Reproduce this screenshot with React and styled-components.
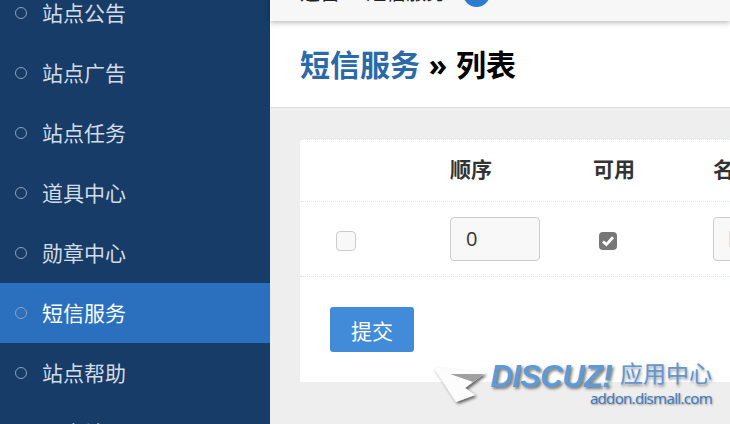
import React from "react";
import styled, { createGlobalStyle } from "styled-components";

const menuItems = [
  "站点公告",
  "站点广告",
  "站点任务",
  "道具中心",
  "勋章中心",
  "短信服务",
  "站点帮助",
  "云点地图",
];

export default function App() {
  return (
    <Page>
      <GlobalStyle />
      <Sidebar>
        {menuItems.map((item) => (
          <MenuItem key={item} $active={item === "短信服务"}>
            <MenuDot />
            <MenuLabel>{item}</MenuLabel>
          </MenuItem>
        ))}
      </Sidebar>
      <Main>
        <TopBar>
          <Crumbs>运营 » 短信服务</Crumbs>
          <CrumbBadge />
        </TopBar>
        <TitleBar>
          <Title>
            <TitleLink>短信服务</TitleLink> » 列表
          </Title>
        </TitleBar>
        <Content>
          <Card>
            <HeadRow>
              <CheckCell />
              <OrderCell>顺序</OrderCell>
              <EnableCell>可用</EnableCell>
              <NameCell>名称</NameCell>
            </HeadRow>
            <BodyRow>
              <CheckCell>
                <Check />
              </CheckCell>
              <OrderCell>
                <OrderInput defaultValue="0" />
              </OrderCell>
              <EnableCell>
                <Check $checked>
                  <svg width="14" height="14" viewBox="0 0 14 14">
                    <path d="M2 7.4 5.4 10.6 12 3.2" fill="none" stroke="#fff" strokeWidth="2.8" />
                  </svg>
                </Check>
              </EnableCell>
              <NameCell>
                <NameInput />
              </NameCell>
            </BodyRow>
            <Actions>
              <SubmitButton>提交</SubmitButton>
            </Actions>
          </Card>
        </Content>
      </Main>
      <Watermark>
        <MarkArrow width="58" height="46" viewBox="0 0 58 46">
          <defs>
            <filter id="arrowShadow" x="-20%" y="-20%" width="150%" height="150%">
              <feDropShadow dx="2" dy="2" stdDeviation="1.6" floodColor="#000" floodOpacity="0.6" />
            </filter>
          </defs>
          <path d="M1 5 53 11 41 20 33 26 43 33 24 40Z" fill="#fcfcfc" filter="url(#arrowShadow)" />
          <path d="M18 12 41 20 52 12Z" fill="#a0a0a0" />
        </MarkArrow>
        <MarkText>
          <MarkTop>
            <MarkLogo>DISCUZ!</MarkLogo>
            <MarkCn>应用中心</MarkCn>
          </MarkTop>
          <MarkUrl>addon.dismall.com</MarkUrl>
        </MarkText>
      </Watermark>
    </Page>
  );
}

const GlobalStyle = createGlobalStyle`
  html, body {
    margin: 0;
    padding: 0;
    overflow: hidden;
  }
  body {
    font-family: "Open Sans", "Liberation Sans", "Noto Sans CJK SC", sans-serif;
  }
`;

const Page = styled.div`
  position: relative;
  display: flex;
  width: 730px;
  height: 424px;
  overflow: hidden;
  background-color: #eee;
`;

const Sidebar = styled.div`
  flex: 0 0 270px;
  margin-top: -17px;
  background-color: #173c67;
`;

const MenuItem = styled.div`
  display: flex;
  align-items: center;
  gap: 15px;
  height: 60px;
  padding-left: 15px;
  font-size: 21px;
  color: ${(p) => (p.$active ? "#fff" : "#d3dbe4")};
  background-color: ${(p) => (p.$active ? "#2a70bf" : "transparent")};
`;

const MenuDot = styled.span`
  box-sizing: border-box;
  width: 12px;
  height: 12px;
  border: 1px solid #8ea3ba;
  border-radius: 50%;
`;

const MenuLabel = styled.span`
  margin-bottom: 2px;
`;

const Main = styled.div`
  flex: 1;
  min-width: 0;
  display: flex;
  flex-direction: column;
  margin-top: -30px;
`;

const TopBar = styled.div`
  position: relative;
  z-index: 1;
  display: flex;
  align-items: center;
  flex: 0 0 51px;
  padding: 0 0 5px 30px;
  box-sizing: border-box;
  background-color: #f7f7f7;
  box-shadow: 0 2px 5px rgba(0, 0, 0, 0.25);
`;

const Crumbs = styled.div`
  font-size: 20px;
  line-height: 24px;
  white-space: nowrap;
  color: #222;
  word-spacing: 3px;
`;

const CrumbBadge = styled.span`
  flex: none;
  width: 27px;
  height: 27px;
  margin-left: 17px;
  border-radius: 50%;
  background-color: #2f7bd0;
`;

const TitleBar = styled.div`
  flex: 0 0 87px;
  box-sizing: border-box;
  padding: 23px 30px 0;
  background-color: #fff;
  border-bottom: 1px solid #ddd;
`;

const Title = styled.h1`
  margin: 0;
  font-size: 30px;
  line-height: 42px;
  font-weight: 700;
  white-space: nowrap;
  word-spacing: 1px;
  color: #000;
`;

const TitleLink = styled.span`
  color: #2a6aa9;
`;

const Content = styled.div`
  padding: 31px 0 0 30px;
`;

const Card = styled.div`
  width: 600px;
  height: 243px;
  box-sizing: border-box;
  background-color: #fff;
  border-top: 1px dotted #cfe9f8;
`;

const HeadRow = styled.div`
  display: flex;
  align-items: center;
  height: 62px;
  padding-bottom: 5px;
  box-sizing: border-box;
  font-size: 21px;
  font-weight: 700;
  color: #333;
  border-bottom: 1px dotted #cfe9f8;
`;

const BodyRow = styled.div`
  display: flex;
  align-items: center;
  height: 75px;
  box-sizing: border-box;
  border-bottom: 1px dotted #cfe9f8;
`;

const CheckCell = styled.div`
  flex: 0 0 150px;
  box-sizing: border-box;
  padding: 4px 0 0 36px;
`;

const OrderCell = styled.div`
  flex: 0 0 143px;
`;

const EnableCell = styled.div`
  flex: 0 0 120px;
`;

const NameCell = styled.div`
  flex: 1;
  white-space: nowrap;
`;

const Check = styled.span`
  display: flex;
  align-items: center;
  justify-content: center;
  box-sizing: border-box;
  width: ${(p) => (p.$checked ? "18px" : "20px")};
  height: ${(p) => (p.$checked ? "18px" : "20px")};
  margin: ${(p) => (p.$checked ? "4px 0 0 6px" : "0")};
  border: ${(p) => (p.$checked ? "none" : "1px solid #ccc")};
  border-radius: 4px;
  background-color: ${(p) => (p.$checked ? "#777" : "#f8f8f8")};
`;

const OrderInput = styled.input`
  display: block;
  box-sizing: border-box;
  width: 90px;
  height: 44px;
  padding: 0 15px 2px;
  font: inherit;
  font-size: 20px;
  color: #333;
  background-color: #f8f8f8;
  border: 1px solid #ccc;
  border-radius: 4px;
  outline: none;
`;

const NameInput = styled(OrderInput)`
  width: 200px;
  background: linear-gradient(#f6dcae, #f6dcae) no-repeat 15px center / 40px 16px, #f8f8f8;
`;

const Actions = styled.div`
  padding: 30px 30px 0;
`;

const SubmitButton = styled.button`
  display: block;
  width: 84px;
  height: 45px;
  padding: 0;
  font: inherit;
  font-size: 21px;
  color: #fff;
  background-color: #428bd8;
  border: none;
  border-radius: 3px;
`;

const Watermark = styled.div`
  position: absolute;
  left: 432px;
  top: 362px;
  display: flex;
  align-items: flex-start;
  pointer-events: none;
`;

const MarkArrow = styled.svg`
  flex: none;
`;

const MarkText = styled.div`
  display: flex;
  flex-direction: column;
  align-items: flex-end;
  width: 222px;
  padding-top: 1px;
`;

const MarkTop = styled.div`
  display: flex;
  align-items: center;
  gap: 8px;
  height: 28px;
`;

const MarkLogo = styled.span`
  font-family: "Liberation Sans", sans-serif;
  font-size: 31px;
  font-style: italic;
  font-weight: 700;
  letter-spacing: -0.6px;
  color: #5e9ad8;
  text-shadow: 2px 2px 3px rgba(0, 0, 0, 0.5);
`;

const MarkCn = styled.span`
  margin-bottom: 8px;
  font-size: 23px;
  line-height: 28px;
  color: #5f97d3;
  text-shadow: 1px 2px 3px rgba(0, 0, 0, 0.4);
`;

const MarkUrl = styled.span`
  margin-top: -2px;
  font-family: "Noto Sans", sans-serif;
  font-size: 15px;
  line-height: 18px;
  letter-spacing: -0.7px;
  color: #3f7cbd;
  text-shadow: 1px 1px 2px rgba(0, 0, 0, 0.35);
`;
